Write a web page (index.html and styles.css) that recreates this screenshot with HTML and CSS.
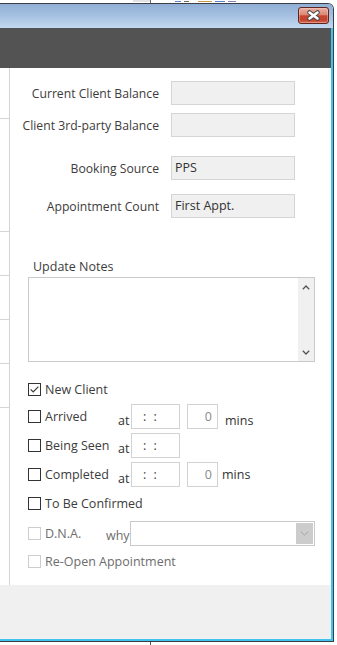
FILE: index.html
```html
<!DOCTYPE html>
<html lang="en">
<head>
<meta charset="utf-8">
<title>Appointment</title>
<link rel="stylesheet" href="styles.css">
</head>
<body>
<div class="desk-top"><span class="dt-block"></span><span class="dt-line"></span><span class="dt-frag f-a"></span><span class="dt-frag f-b"></span><span class="dt-frag f-c"></span><span class="dt-frag f-d"></span><span class="dt-frag f-e"></span></div>
<div class="window">
  <div class="titlebar">
    <div class="close">
      <svg width="31" height="17" viewBox="0 0 31 17">
        <path d="M11.5 5.5 L19.5 11.5 M19.5 5.5 L11.5 11.5" stroke="#4a4a4a" stroke-width="4.6" stroke-linecap="round" fill="none"/>
        <path d="M11.5 5.5 L19.5 11.5 M19.5 5.5 L11.5 11.5" stroke="#ffffff" stroke-width="2.6" stroke-linecap="round" fill="none"/>
      </svg>
    </div>
  </div>
  <div class="frame">
    <div class="toolbar"></div>
    <div class="content">
      <div class="leftcol">
        <div class="cell c1"></div>
        <div class="cell c2"></div>
        <div class="cell c3"></div>
        <div class="cell c3"></div>
        <div class="cell c3"></div>
        <div class="cell c3"></div>
      </div>
      <div class="panel">
        <div class="field f1"><span class="flabel">Current Client Balance</span><div class="fbox"></div></div>
        <div class="field f2"><span class="flabel">Client 3rd-party Balance</span><div class="fbox"></div></div>
        <div class="field f3"><span class="flabel">Booking Source</span><div class="fbox">PPS</div></div>
        <div class="field f4"><span class="flabel">Appointment Count</span><div class="fbox">First Appt.</div></div>

        <div class="notes-label">Update Notes</div>
        <div class="notes">
          <div class="notes-text"></div>
          <div class="vscroll">
            <svg width="8" height="5" viewBox="0 0 8 5"><path d="M0.8 4.3 L4 1 L7.2 4.3" stroke="#555" stroke-width="1.3" fill="none"/></svg>
            <svg width="8" height="5" viewBox="0 0 8 5"><path d="M0.8 0.7 L4 4 L7.2 0.7" stroke="#555" stroke-width="1.3" fill="none"/></svg>
          </div>
        </div>

        <div class="checks">
          <div class="crow r-new">
            <span class="cb"><svg width="11" height="11" viewBox="0 0 11 11"><path d="M1.6 5.4 L4.2 8 L9.4 2.6" stroke="#3a3a3a" stroke-width="1.2" fill="none"/></svg></span>
            <span class="clabel">New Client</span>
          </div>
          <div class="crow r-arr">
            <span class="cb"></span>
            <span class="clabel w-at">Arrived</span>
            <span class="at">at</span>
            <div class="tbox">: :</div>
            <div class="mbox">0</div>
            <span class="mins low">mins</span>
          </div>
          <div class="crow r-seen">
            <span class="cb"></span>
            <span class="clabel w-at">Being Seen</span>
            <span class="at">at</span>
            <div class="tbox">: :</div>
          </div>
          <div class="crow r-comp">
            <span class="cb"></span>
            <span class="clabel w-at">Completed</span>
            <span class="at">at</span>
            <div class="tbox">: :</div>
            <div class="mbox">0</div>
            <span class="mins tight">mins</span>
          </div>
          <div class="crow r-tbc">
            <span class="cb"></span>
            <span class="clabel">To Be Confirmed</span>
          </div>
          <div class="crow r-dna disabled">
            <span class="cb"></span>
            <span class="clabel w-why">D.N.A.</span>
            <span class="why">why</span>
            <div class="combo">
              <div class="dd"><svg width="9" height="5" viewBox="0 0 9 5"><path d="M0.8 0.8 L4.5 4.2 L8.2 0.8" stroke="#a6a6a6" stroke-width="1" fill="none"/></svg></div>
            </div>
          </div>
          <div class="crow r-reopen disabled">
            <span class="cb"></span>
            <span class="clabel">Re-Open Appointment</span>
          </div>
        </div>
      </div>
    </div>
    <div class="footer"></div>
  </div>
</div>
<div class="desk-bottom"><span class="db-line"></span></div>
</body>
</html>
```

FILE: styles.css
```css
html, body {
  margin: 0;
  padding: 0;
  background: #ffffff;
}
body {
  width: 337px;
  height: 645px;
  overflow: hidden;
  font-family: "Open Sans", "Noto Sans", sans-serif;
  font-size: 12.5px;
  line-height: 16px;
  color: #3c3c3c;
}

/* desktop behind the window */
.desk-top {
  height: 3px;
  display: flex;
  align-items: flex-start;
  overflow: hidden;
}
.dt-block {
  margin-left: 133px;
  width: 17px;
  height: 2px;
  background: #e2e2e2;
}
.dt-line {
  width: 1px;
  height: 3px;
  background: #6a6a6a;
}
.dt-frag {
  height: 1px;
  margin-top: 1px;
  background: #5b83c9;
}
.f-a { margin-left: 24px; width: 6px; }
.f-b { margin-left: 3px; width: 5px; background: #7a6a5a; }
.f-c { margin-left: 9px; width: 14px; background: #c89a4a; }
.f-d { margin-left: 3px; width: 10px; }
.f-e { margin-left: 3px; width: 8px; background: #8a7fb8; }

.desk-bottom {
  height: 3px;
  display: flex;
}
.db-line {
  margin-left: 150px;
  width: 1px;
  height: 3px;
  background: #555;
}

/* window */
.window {
  width: 333px;
  border: 1px solid #3b3f45;
  border-left: none;
  border-top-right-radius: 6px;
  overflow: hidden;
}
.titlebar {
  height: 24px;
  background: linear-gradient(#90afd5, #a8c3e3 55%, #c4d9ef);
  display: flex;
  justify-content: flex-end;
  align-items: flex-start;
  padding: 3px 4px 0 0;
  box-sizing: border-box;
}
.close {
  width: 31px;
  height: 17px;
  box-sizing: border-box;
  border: 1px solid #5e261f;
  border-radius: 3px;
  background: linear-gradient(#eab0a2 0%, #dc8874 45%, #c8462f 52%, #c3432e 80%, #d86d55 100%);
  display: flex;
  align-items: center;
  justify-content: center;
  box-shadow: inset 0 0 0 1px rgba(255, 220, 210, 0.35);
}
.close svg {
  display: block;
  margin: -1px;
}
.frame {
  border-right: 2px solid #41c3f0;
  border-bottom: 2px solid #41c3f0;
}
.toolbar {
  height: 40px;
  background: #535353;
}
.content {
  height: 517px;
  display: flex;
  background: #ffffff;
}
.leftcol {
  width: 9px;
  border-right: 1px solid #d4d4d4;
  flex-shrink: 0;
}
.cell {
  border-bottom: 1px solid #d4d4d4;
}
.c1 { height: 50px; }
.c2 { height: 112px; }
.c3 { height: 43px; }

.panel {
  flex: 1;
}

/* label + value rows */
.field {
  display: flex;
  align-items: center;
  height: 24px;
}
.f1 { margin-top: 13px; }
.f2 { margin-top: 8px; }
.f3 { margin-top: 19px; }
.f4 { margin-top: 14px; }
.flabel {
  width: 149px;
  margin-right: 12px;
  padding-top: 2px;
  text-align: right;
  white-space: nowrap;
  font-size: 12.2px;
}
.fbox {
  width: 124px;
  height: 24px;
  box-sizing: border-box;
  border: 1px solid #d5d5d5;
  background: #f0f0f0;
  padding-left: 3px;
  line-height: 22px;
  color: #333;
}

/* notes */
.notes-label {
  margin-top: 40px;
  padding-left: 23px;
  height: 16px;
  line-height: 18px;
}
.notes {
  margin-top: 3px;
  margin-left: 18px;
  width: 287px;
  height: 85px;
  box-sizing: border-box;
  border: 1px solid #cacaca;
  display: flex;
}
.notes-text {
  flex: 1;
}
.vscroll {
  width: 16px;
  background: #f0f0f0;
  display: flex;
  flex-direction: column;
  justify-content: space-between;
  align-items: center;
  padding: 7px 0 6px;
  box-sizing: border-box;
}
.vscroll svg {
  display: block;
}

/* checkbox rows */
.checks {
  margin-top: 13px;
  padding-left: 18px;
}
.crow {
  display: flex;
  align-items: center;
  white-space: nowrap;
}
.r-new { height: 28px; }
.r-arr { height: 27px; }
.r-seen { height: 30px; }
.r-comp { height: 29px; }
.r-tbc { height: 28px; }
.r-dna { height: 32px; }
.r-reopen { height: 24px; }

.cb {
  width: 13px;
  height: 13px;
  box-sizing: border-box;
  border: 1px solid #333333;
  background: #ffffff;
  margin-right: 4px;
  flex-shrink: 0;
  display: flex;
  align-items: center;
  justify-content: center;
}
.cb svg {
  display: block;
}
.clabel {
  padding-top: 1px;
}
.w-at { width: 73px; }
.w-why { width: 61px; }
.at {
  width: 13px;
  padding-top: 8px;
  color: #333;
}
.tbox {
  width: 49px;
  height: 25px;
  box-sizing: border-box;
  border: 1px solid #d2d2d2;
  padding-left: 11px;
  line-height: 23px;
  word-spacing: 4px;
  color: #444;
}
.mbox {
  width: 31px;
  height: 25px;
  margin-left: 7px;
  box-sizing: border-box;
  border: 1px solid #d2d2d2;
  padding-right: 5px;
  text-align: right;
  line-height: 23px;
  color: #8a8a8a;
}
.mins {
  color: #333;
}
.mins.low {
  margin-left: 7px;
  padding-top: 8px;
}
.mins.tight {
  margin-left: 4px;
}

.disabled .cb {
  border-color: #cdcdcd;
}
.disabled .clabel,
.disabled .why {
  color: #6d6d6d;
}
.why {
  width: 24px;
  padding-top: 6px;
}
.combo {
  width: 185px;
  height: 25px;
  box-sizing: border-box;
  border: 1px solid #c9c9c9;
  display: flex;
  justify-content: flex-end;
  padding: 1px;
}
.dd {
  width: 17px;
  background: #cccccc;
  display: flex;
  align-items: center;
  justify-content: center;
}
.dd svg {
  display: block;
}

.footer {
  height: 54px;
  background: #f0f0f0;
}
```
